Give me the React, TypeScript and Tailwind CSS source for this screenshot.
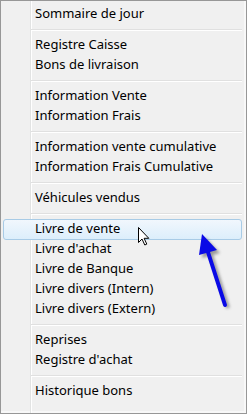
import React from "react";

type Entry = { label: string; active?: boolean } | "sep";

const entries: Entry[] = [
  { label: "Sommaire de jour" },
  "sep",
  { label: "Registre Caisse" },
  { label: "Bons de livraison" },
  "sep",
  { label: "Information Vente" },
  { label: "Information Frais" },
  "sep",
  { label: "Information vente cumulative" },
  { label: "Information Frais Cumulative" },
  "sep",
  { label: "Véhicules vendus" },
  "sep",
  { label: "Livre de vente", active: true },
  { label: "Livre d'achat" },
  { label: "Livre de Banque" },
  { label: "Livre divers (Intern)" },
  { label: "Livre divers (Extern)" },
  "sep",
  { label: "Reprises" },
  { label: "Registre d'achat" },
  "sep",
  { label: "Historique bons" },
];

const Cursor = () => (
  <svg width="12" height="19" viewBox="0 0 12 19" className="absolute left-[137px] top-[226px]">
    <path
      d="M0.5 0.5 L0.5 15.5 L4 12 L6.8 18 L8.8 17.1 L6.1 11.3 L10.8 11.3 Z"
      fill="#fff"
      stroke="#000"
      strokeWidth="1"
      strokeLinejoin="miter"
    />
  </svg>
);

const Arrow = () => (
  <svg width="247" height="414" className="absolute left-0 top-0 pointer-events-none">
    <defs>
      <filter id="blur" x="-20%" y="-20%" width="140%" height="140%">
        <feGaussianBlur stdDeviation="1.6" />
      </filter>
    </defs>
    {/* shadow */}
    <g transform="translate(3 3)" filter="url(#blur)" opacity="0.55">
      <line x1="224" y1="304" x2="206" y2="248" stroke="#555" strokeWidth="4" />
      <polygon points="201,233 216,249 198,254" fill="#555" />
    </g>
    <line x1="224" y1="304" x2="206" y2="248" stroke="#0a0ae6" strokeWidth="4" strokeLinecap="round" />
    <polygon points="201,233 216,249 198,254" fill="#0a0ae6" />
  </svg>
);

export default function App() {
  return (
    <div className="relative w-[247px] h-[414px] border border-[#979797] bg-[#f0f0f0] font-['Segoe_UI','Noto_Sans',sans-serif] text-[13px] text-black shadow-[inset_-2px_-2px_0_#f8f8f8]">
      <div className="flex flex-col h-full pt-[3px] bg-[linear-gradient(to_right,transparent_29px,#e2e3e3_29px,#e2e3e3_30px,#ffffff_30px,#ffffff_31px,transparent_31px)]">
        {entries.map((e, i) =>
          e === "sep" ? (
            <div key={i} className="h-[11px] flex flex-col justify-center pl-[30px] pr-[4px]">
              <div className="h-px bg-[#e0e0e0]" />
              <div className="h-px bg-white" />
            </div>
          ) : e.active ? (
            <div
              key={i}
              className="h-[21px] -my-[0.5px] ml-[2px] mr-[4px] pl-[31px] flex items-center rounded-[3px] border border-[#a8cbe6] bg-[linear-gradient(to_bottom,#f1f7fd,#dceefb)]"
            >
              {e.label}
            </div>
          ) : (
            <div key={i} className="h-[20px] pl-[34px] flex items-center whitespace-nowrap">
              {e.label}
            </div>
          )
        )}
      </div>
      <Cursor />
      <Arrow />
    </div>
  );
}
